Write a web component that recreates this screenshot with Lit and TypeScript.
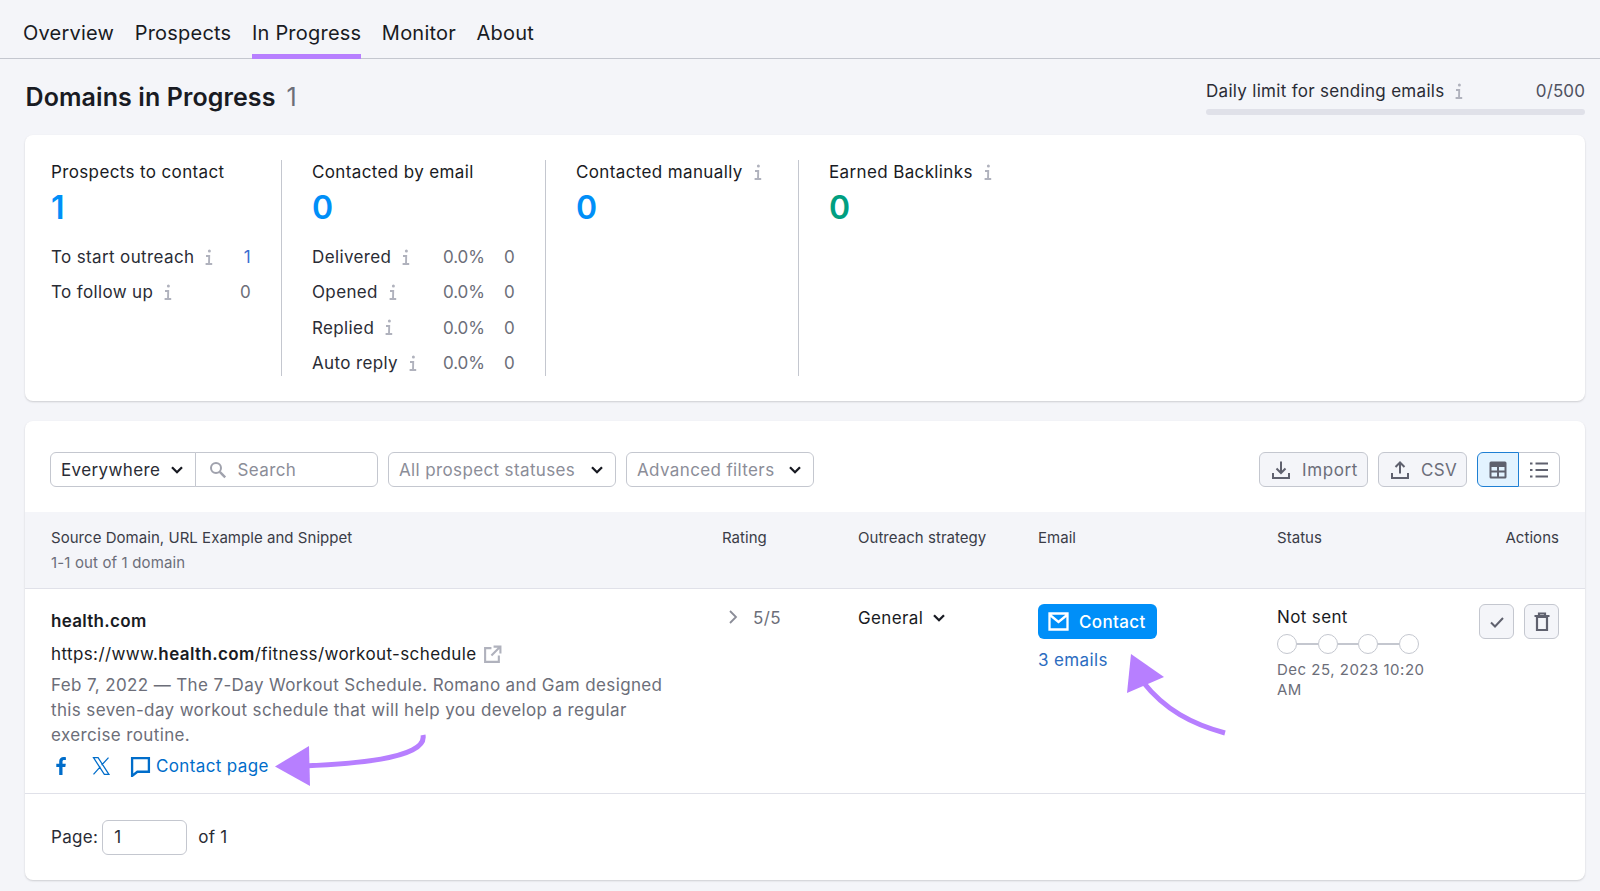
import { LitElement, html, css, svg } from "lit";
import { customElement } from "lit/decorators.js";

const info = html`<svg class="info" viewBox="0 0 9 17"><circle cx="5.400" cy="2" r="1.500" fill="currentColor"/><path d="M2 7h3.200l-.2 8H8.200M1.600 15H5" fill="none" stroke="currentColor" stroke-width="1.900"/></svg>`;
const chev = html`<svg class="chev" viewBox="0 0 14 10"><path d="M2 2.200l5 5 5-5" fill="none" stroke="currentColor" stroke-width="2.300"/></svg>`;

@customElement("app-root")
export class AppRoot extends LitElement {
  static styles = css`
    :host { display: block; position: relative; width: 1600px; height: 891px; overflow: hidden; background: #f4f5f9; font-family: Inter, "Liberation Sans", sans-serif; font-size: 17px; color: #191b23; letter-spacing: 0.37px; }
    * { box-sizing: border-box; }
    .tabs { display: flex; gap: 20.5px; height: 59px; padding-left: 23px; border-bottom: 1px solid #c4c7cf; }
    .tab { height: 59px; padding-top: 20px; line-height: 27px; font-size: 20px; letter-spacing: 0.22px; border-bottom: 5px solid transparent; }
    .tab.on { border-bottom-color: #b77fff; }
    .head { display: flex; justify-content: space-between; padding: 0 15px 0 25.5px; height: 76px; }
    .title { display: flex; gap: 11px; align-items: baseline; font-size: 25px; font-weight: 600; padding-top: 21px; line-height: 34px; letter-spacing: 0.1px; }
    .title span { font-weight: 400; color: #6c6e79; }
    .limit { width: 379px; padding-top: 20px; }
    .limit-row { display: flex; align-items: center; justify-content: space-between; line-height: 24px; height: 24px; color: #2a2c35; letter-spacing: 0.3px; }
    .limit-row > div { display: flex; align-items: center; gap: 10px; }
    .limit-row .n { color: #4f5160; letter-spacing: 0.1px; }
    .bar { height: 6px; margin-top: 6px; background: #e0e1e9; border-radius: 3px; }
    .card { margin: 0 15px 0 25px; background: #fff; border-radius: 8px; box-shadow: 0 1px 2px rgba(25,27,35,.18); }
    .stats { display: flex; height: 266px; padding: 25px 0; }
    .col { padding-left: 30px; border-right: 1px solid #c4c7cf; height: 216px; }
    .col:first-child { padding-left: 26px; width: 257px; }
    .col.b { width: 264px; }
    .col.c { width: 253px; }
    .col.d { border: 0; padding-left: 30px; }
    .lab { display: flex; align-items: center; gap: 10px; height: 24px; line-height: 24px; }
    .big { font-size: 32px; font-weight: 600; color: #008ff8; line-height: 40px; margin-top: 4px; height: 40px; margin-bottom: 11.500px; letter-spacing: 0; }
    .big.g { color: #009f81; }
    .r { display: flex; align-items: center; height: 35.300px; color: #2a2c35; }
    .r .name { display: flex; align-items: center; gap: 10px; flex: 1; }
    .r .pct { width: 61px; color: #6c6e79; letter-spacing: -0.1px; }
    .r .v { color: #6c6e79; }
    .r .link { color: #3a6ed0; }
    .one .r { width: 200px; }
    .two .r { width: 203px; }
    .two .r .v { width: 11px; }
    .info { width: 9px; height: 17px; color: #b0b2bd; flex: none; }
    .chev { width: 14px; height: 10px; flex: none; color: #191b23; }
    .table { margin-top: 20px; height: 459px; overflow: hidden; }
    .toolbar { display: flex; align-items: flex-start; padding: 31px 25px 0 24.500px; height: 91px; gap: 10px; }
    .group { display: flex; }
    .sel { display: flex; align-items: center; justify-content: space-between; height: 35px; padding: 0 11px 0 10.500px; border: 1px solid #c4c7cf; border-radius: 6px; background: #fff; color: #8b8d98; }
    .sel.ev { width: 146px; border-radius: 6px 0 0 6px; color: #2a2c35; }
    .search { width: 183px; margin-left: -1px; border-radius: 0 6px 6px 0; justify-content: flex-start; gap: 11px; padding-left: 13px; }
    .sel.st { width: 228px; }
    .sel.ad { width: 188px; }
    .spacer { flex: 1; }
    .btn { display: flex; align-items: center; gap: 11px; height: 35px; padding: 0 0 0 11px; border: 1px solid #c4c7cf; border-radius: 6px; background: #f4f5f9; color: #6c6e79; }
    .btn.imp { width: 109px; letter-spacing: 0.6px; }
    .btn.csv { width: 89px; }
    .btn svg { width: 20px; height: 20px; color: #5f616e; flex: none; }
    .toggle { display: flex; height: 35px; width: 83px; }
    .toggle div { flex: 1; display: flex; align-items: center; justify-content: center; border: 1px solid #c4c7cf; background: #fff; border-left: 0; border-radius: 0 6px 6px 0; }
    .toggle div.on { flex: none; width: 42px; background: #e3f3ff; border: 1px solid #1f7fd3; border-radius: 6px 0 0 6px; }
    .toggle svg { width: 20px; height: 20px; color: #5f616e; }
    .grid { display: grid; grid-template-columns: 671px 136px 180px 239px 1fr; padding: 0 26px 0 26px; }
    .thead { height: 77px; background: #f4f5f9; border-bottom: 1px solid #e0e1e9; font-size: 15px; line-height: 25px; padding-top: 13px; color: #3a3c47; letter-spacing: 0.04px; }
    .thead .sub { color: #6c6e79; letter-spacing: 0.14px; }
    .thead .last { display: flex; justify-content: space-between; }
    .row { height: 205px; border-bottom: 1px solid #e0e1e9; padding-top: 19px; }
    .dom { font-weight: 600; line-height: 26px; letter-spacing: 0.3px; }
    .url { display: flex; align-items: center; gap: 6px; line-height: 26px; margin-top: 7px; letter-spacing: 0.39px; }
    .url svg { width: 19px; height: 19px; color: #b0b2bd; }
    .url b { font-weight: 600; }
    .snip { color: #6c6e79; line-height: 25px; margin-top: 6px; width: 630px; }
    .links { display: flex; align-items: center; height: 26px; margin-top: 5px; color: #006dca; }
    .links svg { flex: none; }
    .f { width: 20px; height: 20px; }
    .x { width: 20px; height: 20px; margin-left: 20px; }
    .cp { width: 21px; height: 21px; margin-left: 19px; margin-right: 5px; }
    .rate { display: flex; align-items: flex-start; color: #6c6e79; line-height: 26px; padding-left: 5px; gap: 14px; margin-top: -3px; }
    .rate svg { width: 12px; height: 16px; color: #8b8d98; margin-top: 4px; }
    .strat { display: flex; align-items: center; height: 26px; gap: 9px; margin-top: -3px; }
    .contact { display: flex; align-items: center; gap: 10px; width: 119px; height: 35px; padding-left: 10px; border-radius: 6px; background: #008ff8; color: #fff; font-weight: 500; margin-top: -4px; }
    .contact svg { width: 21px; height: 19px; flex: none; }
    .emails { color: #2b6cc0; line-height: 26px; margin-top: 8px; }
    .stat-cell { display: flex; justify-content: space-between; }
    .status { margin-top: -4px; line-height: 26px; }
    .steps { display: flex; align-items: center; margin-top: 4px; }
    .steps i { width: 20px; height: 20px; border: 1px solid #c4c7cf; border-radius: 50%; background: #fff; }
    .steps u { width: 20.500px; height: 2px; background: #c4c7cf; }
    .date { color: #6c6e79; font-size: 15px; line-height: 20px; margin-top: 6px; width: 160px; letter-spacing: 0.5px; }
    .acts { display: flex; justify-content: flex-end; gap: 10px; margin-top: -4px; }
    .ic { width: 35px; height: 35px; display: flex; align-items: center; justify-content: center; border: 1px solid #c4c7cf; border-radius: 6px; background: #f4f5f9; color: #5f616e; }
    .ic svg { width: 20px; height: 20px; }
    .pager { display: flex; align-items: center; padding: 25.500px 26px 0; gap: 4px; color: #2a2c35; letter-spacing: 0.3px; }
    .inp { width: 85px; height: 35px; border: 1px solid #c4c7cf; border-radius: 6px; padding-left: 11px; line-height: 33px; }
    .of { margin-left: 7px; color: #2a2c35; }
    .overlay { position: absolute; left: 0; top: 0; width: 1600px; height: 891px; pointer-events: none; }
  `;

  render() {
    return html`
      <nav class="tabs">
        ${["Overview", "Prospects", "In Progress", "Monitor", "About"].map((t) => html`<div class="tab ${t === "In Progress" ? "on" : ""}">${t}</div>`)}
      </nav>
      <div class="head">
        <div class="title">Domains in Progress <span>1</span></div>
        <div class="limit">
          <div class="limit-row"><div>Daily limit for sending emails ${info}</div><span class="n">0/500</span></div>
          <div class="bar"></div>
        </div>
      </div>
      <section class="card stats">
        <div class="col one">
          <div class="lab">Prospects to contact</div>
          <div class="big">1</div>
          <div class="r"><span class="name">To start outreach ${info}</span><span class="link">1</span></div>
          <div class="r"><span class="name">To follow up ${info}</span><span class="v">0</span></div>
        </div>
        <div class="col b two">
          <div class="lab">Contacted by email</div>
          <div class="big">0</div>
          ${["Delivered", "Opened", "Replied", "Auto reply"].map((n) => html`<div class="r"><span class="name">${n} ${info}</span><span class="pct">0.0%</span><span class="v">0</span></div>`)}
        </div>
        <div class="col c">
          <div class="lab">Contacted manually ${info}</div>
          <div class="big">0</div>
        </div>
        <div class="col d">
          <div class="lab">Earned Backlinks ${info}</div>
          <div class="big g">0</div>
        </div>
      </section>
      <section class="card table">
        <div class="toolbar">
          <div class="group">
            <div class="sel ev">Everywhere ${chev}</div>
            <div class="sel search">
              <svg width="18" height="18" viewBox="0 0 18 18"><circle cx="7" cy="7" r="5" fill="none" stroke="#a0a2ad" stroke-width="2"/><path d="M10.800 10.800l5.400 5.600" stroke="#a0a2ad" stroke-width="2.400"/></svg>
              Search
            </div>
          </div>
          <div class="sel st">All prospect statuses ${chev}</div>
          <div class="sel ad">Advanced filters ${chev}</div>
          <div class="spacer"></div>
          <div class="btn imp"><svg viewBox="0 0 20 20"><path d="M10 1.500v11M5.500 8.500l4.500 4.500 4.500-4.500M2 13v5h16v-5" fill="none" stroke="currentColor" stroke-width="2"/></svg>Import</div>
          <div class="btn csv"><svg viewBox="0 0 20 20"><path d="M10 13.500V3M5.500 7L10 2.500 14.500 7M2 13v5h16v-5" fill="none" stroke="currentColor" stroke-width="2"/></svg>CSV</div>
          <div class="toggle">
            <div class="on"><svg viewBox="0 0 20 20"><path fill-rule="evenodd" d="M3 1.500h14a1.500 1.500 0 0 1 1.500 1.500v14a1.500 1.500 0 0 1-1.500 1.500H3A1.500 1.500 0 0 1 1.500 17V3A1.500 1.500 0 0 1 3 1.500zM3.500 7v3.500h5.500V7zm7.500 0v3.500h5.500V7zM3.500 12.500v4h5.500v-4zm7.500 0v4h5.500v-4z" fill="currentColor"/></svg></div>
            <div><svg viewBox="0 0 20 20"><path d="M6.500 3.500H19M6.500 10H19M6.500 16.500H19M1 3.500h2.500M1 10h2.500M1 16.500h2.500" fill="none" stroke="currentColor" stroke-width="2"/></svg></div>
          </div>
        </div>
        <div class="grid thead">
          <div>Source Domain, URL Example and Snippet<div class="sub">1-1 out of 1 domain</div></div>
          <div>Rating</div>
          <div>Outreach strategy</div>
          <div>Email</div>
          <div class="last"><span>Status</span><span>Actions</span></div>
        </div>
        <div class="grid row">
          <div>
            <div class="dom">health.com</div>
            <div class="url"><span>https://www.<b>health.com</b>/fitness/workout-schedule</span>
              <svg viewBox="0 0 18 18"><path d="M8 3H2v13h13v-6M10 1.500h6.500V8M16 2L8 10" fill="none" stroke="currentColor" stroke-width="2"/></svg></div>
            <div class="snip">Feb 7, 2022 — The 7-Day Workout Schedule. Romano and Gam designed this seven-day workout schedule that will help you develop a regular exercise routine.</div>
            <div class="links">
              <svg class="f" viewBox="0 0 20 20"><path d="M11.500 19v-8h2.800l.5-3.300h-3.300V5.700c0-1 .4-1.700 1.800-1.700h1.600V1.200C14.500 1.100 13.600 1 12.600 1 10 1 8.200 2.600 8.200 5.300v2.400H5.300V11h2.900v8z" fill="currentColor"/></svg>
              <svg class="x" viewBox="0 0 24 24"><path d="M3 2h5.500L21.500 22H16zM21 2l-8.300 9M3 22l8.300-9.200" fill="none" stroke="currentColor" stroke-width="1.500"/></svg>
              <svg class="cp" viewBox="0 0 20 20"><path d="M2 2h16v13H7l-5 4z" fill="none" stroke="currentColor" stroke-width="2.200"/></svg>
              Contact page
            </div>
          </div>
          <div class="rate"><svg viewBox="0 0 12 16"><path d="M3 2l6 6-6 6" fill="none" stroke="currentColor" stroke-width="1.800"/></svg>5/5</div>
          <div class="strat">General ${chev}</div>
          <div>
            <div class="contact"><svg viewBox="0 0 21 19"><path d="M1.500 1.500h18v16h-18zM2 3l8.500 7L19 3" fill="none" stroke="#fff" stroke-width="2.300"/></svg>Contact</div>
            <div class="emails">3 emails</div>
          </div>
          <div class="stat-cell">
            <div class="status">Not sent
              <div class="steps"><i></i><u></u><i></i><u></u><i></i><u></u><i></i></div>
              <div class="date">Dec 25, 2023 10:20 AM</div>
            </div>
            <div class="acts">
              <div class="ic"><svg viewBox="0 0 20 20"><path d="M4 10.500l4 4 8-8.500" fill="none" stroke="currentColor" stroke-width="2"/></svg></div>
              <div class="ic"><svg viewBox="0 0 20 20"><path d="M5 5h10v13H5zM2.500 4h15M7 3.500V1.500h6v2" fill="none" stroke="currentColor" stroke-width="2.200"/></svg></div>
            </div>
          </div>
        </div>
        <div class="pager">Page: <div class="inp">1</div><span class="of">of 1</span></div>
      </section>
      <svg class="overlay" viewBox="0 0 1600 891">
        ${svg`
        <path d="M304 766 C 345 764, 428 760, 423 735" fill="none" stroke="#b77fff" stroke-width="5"/>
        <path d="M275 766.500 L309 746 L310 786 Z" fill="#b77fff"/>
        <path d="M1143 682 C 1165 710, 1192 724, 1225 733" fill="none" stroke="#b77fff" stroke-width="5"/>
        <path d="M1131 654 L1164 677 L1127 693 Z" fill="#b77fff"/>
        `}
      </svg>
    `;
  }
}
